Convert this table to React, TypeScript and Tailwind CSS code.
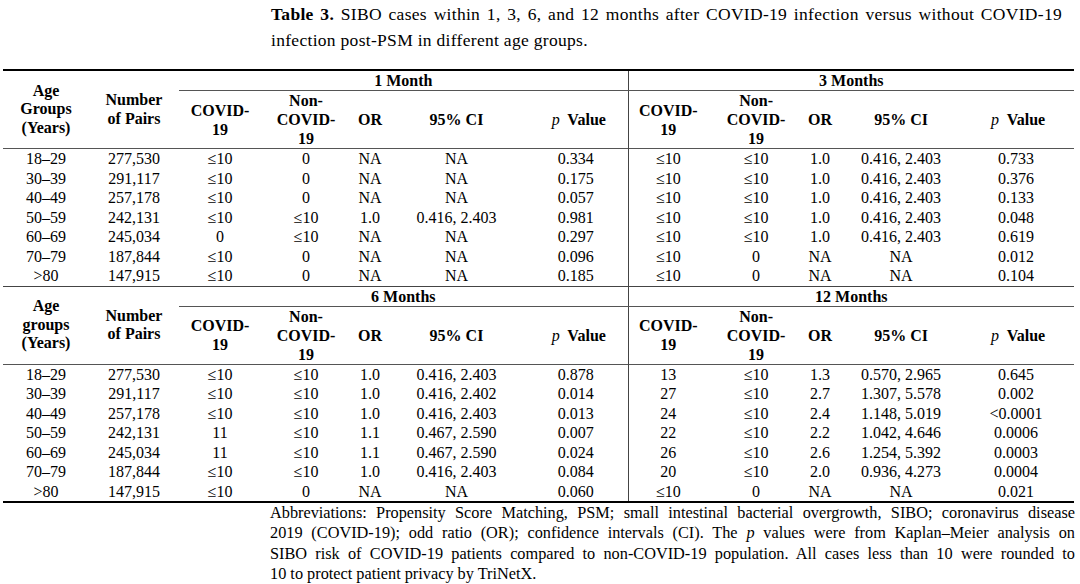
import React from "react";

type Row = string[];

const block1: Row[] = [
  ["18–29", "277,530", "≤10", "0", "NA", "NA", "0.334", "≤10", "≤10", "1.0", "0.416, 2.403", "0.733"],
  ["30–39", "291,117", "≤10", "0", "NA", "NA", "0.175", "≤10", "≤10", "1.0", "0.416, 2.403", "0.376"],
  ["40–49", "257,178", "≤10", "0", "NA", "NA", "0.057", "≤10", "≤10", "1.0", "0.416, 2.403", "0.133"],
  ["50–59", "242,131", "≤10", "≤10", "1.0", "0.416, 2.403", "0.981", "≤10", "≤10", "1.0", "0.416, 2.403", "0.048"],
  ["60–69", "245,034", "0", "≤10", "NA", "NA", "0.297", "≤10", "≤10", "1.0", "0.416, 2.403", "0.619"],
  ["70–79", "187,844", "≤10", "0", "NA", "NA", "0.096", "≤10", "0", "NA", "NA", "0.012"],
  [">80", "147,915", "≤10", "0", "NA", "NA", "0.185", "≤10", "0", "NA", "NA", "0.104"],
];

const block2: Row[] = [
  ["18–29", "277,530", "≤10", "≤10", "1.0", "0.416, 2.403", "0.878", "13", "≤10", "1.3", "0.570, 2.965", "0.645"],
  ["30–39", "291,117", "≤10", "≤10", "1.0", "0.416, 2.402", "0.014", "27", "≤10", "2.7", "1.307, 5.578", "0.002"],
  ["40–49", "257,178", "≤10", "≤10", "1.0", "0.416, 2.403", "0.013", "24", "≤10", "2.4", "1.148, 5.019", "<0.0001"],
  ["50–59", "242,131", "11", "≤10", "1.1", "0.467, 2.590", "0.007", "22", "≤10", "2.2", "1.042, 4.646", "0.0006"],
  ["60–69", "245,034", "11", "≤10", "1.1", "0.467, 2.590", "0.024", "26", "≤10", "2.6", "1.254, 5.392", "0.0003"],
  ["70–79", "187,844", "≤10", "≤10", "1.0", "0.416, 2.403", "0.084", "20", "≤10", "2.0", "0.936, 4.273", "0.0004"],
  [">80", "147,915", "≤10", "0", "NA", "NA", "0.060", "≤10", "0", "NA", "NA", "0.021"],
];

// column widths in px, table runs from x=3 to x=1074
const widths = [86, 90, 82, 90, 38, 135, 104, 80, 96, 32, 130, 108];

function ColHeads({ divider }: { divider?: boolean }) {
  const cell = "p-0 align-middle text-center font-bold leading-[19px]";
  return (
    <>
      <th className={`${cell} ${divider ? "border-l border-[#444]" : ""}`}>
        COVID-
        <br />
        19
      </th>
      <th className={cell}>
        Non-
        <br />
        COVID-
        <br />
        19
      </th>
      <th className={cell}>OR</th>
      <th className={cell}>95% CI</th>
      <th className={`${cell} ${divider ? "pr-[4px]" : "pl-[6px]"}`}>
        <span className="italic font-normal">p</span>&nbsp; Value
      </th>
    </>
  );
}

function Block({
  left,
  right,
  ageLabel,
  rows,
  first,
}: {
  left: string;
  right: string;
  ageLabel: string;
  rows: Row[];
  first?: boolean;
}) {
  const topBorder = first ? "border-t-2 border-t-black" : "border-t border-t-[#444]";
  return (
    <tbody>
      <tr className="h-[20px]">
        <th rowSpan={2} className={`p-0 align-middle text-center font-bold leading-[18.5px] ${topBorder}`}>
          Age
          <br />
          {ageLabel}
          <br />
          (Years)
        </th>
        <th rowSpan={2} className={`p-0 align-middle text-center font-bold leading-[18.5px] ${topBorder}`}>
          Number
          <br />
          of Pairs
        </th>
        <th colSpan={5} className={`p-0 text-center font-bold leading-[19px] border-b border-b-[#555] ${topBorder}`}>
          {left}
        </th>
        <th
          colSpan={5}
          className={`p-0 text-center font-bold leading-[19px] border-b border-b-[#555] border-l border-l-[#444] ${topBorder}`}
        >
          {right}
        </th>
      </tr>
      <tr className="h-[57px]">
        <ColHeads />
        <ColHeads divider />
      </tr>
      {rows.map((r, i) => (
        <tr key={i} className={`h-[19.5px] ${i === 0 ? "border-t border-t-[#555]" : ""}`}>
          {r.map((c, j) => (
            <td
              key={j}
              className={`p-0 text-center leading-[19.5px] whitespace-nowrap ${
                j === 7 ? "border-l border-l-[#444]" : ""
              } ${j === 11 ? "pr-[8px]" : ""}`}
            >
              {c}
            </td>
          ))}
        </tr>
      ))}
    </tbody>
  );
}

export default function App() {
  return (
    <div className="w-[1080px] h-[584px] overflow-hidden bg-white text-black font-['Liberation_Serif',serif]">
      <div className="ml-[271px] w-[791px] pt-[1px] text-[17.5px] leading-[26px] tracking-[0.3px]">
        <div className="text-justify [text-align-last:justify]">
          <span className="font-bold">Table 3.</span> SIBO cases within 1, 3, 6, and 12 months after COVID-19 infection
          versus without COVID-19
        </div>
        <div>infection post-PSM in different age groups.</div>
      </div>

      <table className="mt-[16px] ml-[3px] w-[1071px] table-fixed border-collapse text-[16px] border-b-2 border-b-black">
        <colgroup>
          {widths.map((w, i) => (
            <col key={i} style={{ width: w }} />
          ))}
        </colgroup>
        <Block left="1 Month" right="3 Months" ageLabel="Groups" rows={block1} first />
        <Block left="6 Months" right="12 Months" ageLabel="groups" rows={block2} />
      </table>

      <div className="ml-[270px] w-[805px] text-[16.3px] leading-[20.3px]">
        <div className="text-justify [text-align-last:justify]">
          Abbreviations: Propensity Score Matching, PSM; small intestinal bacterial overgrowth, SIBO; coronavirus disease
        </div>
        <div className="text-justify [text-align-last:justify]">
          2019 (COVID-19); odd ratio (OR); confidence intervals (CI). The <span className="italic">p</span> values were
          from Kaplan–Meier analysis on
        </div>
        <div className="text-justify [text-align-last:justify]">
          SIBO risk of COVID-19 patients compared to non-COVID-19 population. All cases less than 10 were rounded to
        </div>
        <div>10 to protect patient privacy by TriNetX.</div>
      </div>
    </div>
  );
}
